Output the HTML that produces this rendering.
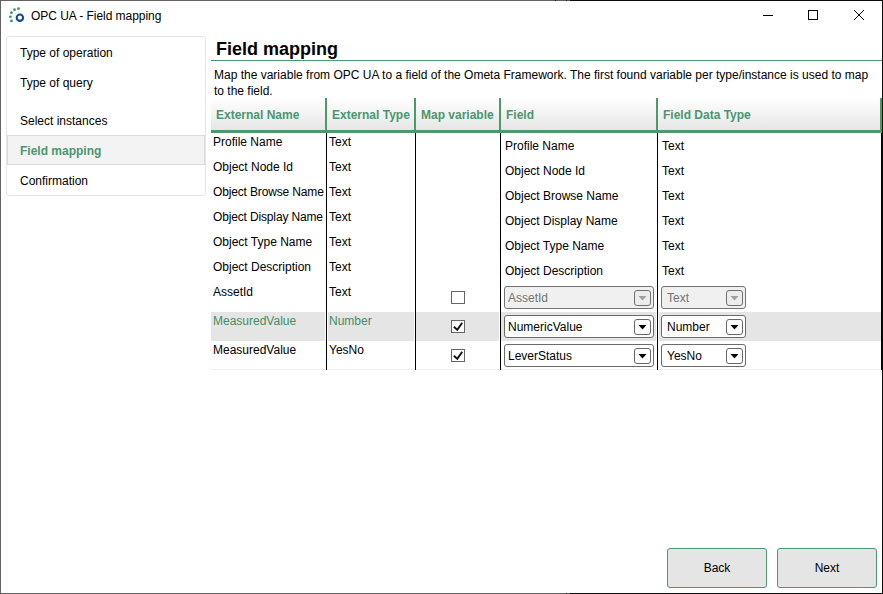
<!DOCTYPE html>
<html><head><meta charset="utf-8">
<style>
*{box-sizing:border-box;margin:0;padding:0}
html,body{width:883px;height:594px;overflow:hidden;background:#fff}
body{position:relative;font-family:"Liberation Sans",sans-serif;font-size:12px;color:#000}
.a{position:absolute;white-space:nowrap;line-height:16px}
.b{position:absolute}
.g{color:#3f8f62}
.hd{font-weight:bold;color:#4b9670}
.vl{position:absolute;width:1px;background:#000;top:133px;height:237px}
.hs{position:absolute;width:2px;background:#4a9a6c;top:98px;height:35px}
.cb{position:absolute;width:14px;height:13px;border:1px solid #656565;background:#fff}
.cb svg{position:absolute;left:-1px;top:-1px}
.combo{position:absolute;height:23px;border:1px solid #6b6b6b;border-radius:3px;background:#fff}
.combo.dis{background:#f0f0f0;border-color:#737373}
.btn{position:absolute;width:17px;height:16px;border:1px solid #666;border-radius:3px;background:#fff}
.btn svg{position:absolute;left:-1px;top:-1px}
.dis .btn svg path{fill:#a0a0a0}
.dis .btn{border-color:#6f6f6f;background:#ececec}
.nbtn{position:absolute;width:100px;height:40px;border:1px solid #4a9a6c;border-radius:3px;background:#e5e5e5;text-align:center;line-height:38px}
</style></head><body>

<!-- window borders -->
<div class="b" style="left:0;top:0;width:570px;height:1px;background:#626262"></div>
<div class="b" style="left:570px;top:0;width:313px;height:1px;background:#0b0b0b"></div>
<div class="b" style="left:0;top:593px;width:570px;height:1px;background:#626262"></div>
<div class="b" style="left:570px;top:593px;width:313px;height:1px;background:#0b0b0b"></div>
<div class="b" style="left:0;top:0;width:1px;height:594px;background:#626262"></div>
<div class="b" style="left:882px;top:0;width:1px;height:594px;background:#0b0b0b"></div>

<div class="b" style="left:555px;top:0;width:1px;height:1px;background:#1a1a1a"></div>
<div class="b" style="left:566px;top:0;width:1px;height:1px;background:#1a1a1a"></div>
<div class="b" style="left:566px;top:593px;width:1px;height:1px;background:#1a1a1a"></div>

<!-- title bar -->
<svg class="b" style="left:0;top:0" width="30" height="30" viewBox="0 0 30 30">
<g fill="#3f9863"><circle cx="18.5" cy="8.7" r="1.4"/><circle cx="14.5" cy="9.7" r="1.4"/><circle cx="11.45" cy="12.7" r="1.4"/><circle cx="10.4" cy="16.85" r="1.4"/><circle cx="11.45" cy="20.9" r="1.4"/></g>
<circle cx="19.9" cy="17.7" r="3.2" fill="none" stroke="#12489a" stroke-width="2.1"/>
</svg>
<div class="a" style="left:31px;top:8px;letter-spacing:-0.05px">OPC UA - Field mapping</div>

<!-- window controls -->
<div class="b" style="left:763px;top:15px;width:10px;height:1px;background:#000"></div>
<div class="b" style="left:808px;top:10px;width:10px;height:10px;border:1px solid #000"></div>
<svg class="b" style="left:853px;top:9px" width="12" height="12" viewBox="0 0 12 12"><path d="M1 1L11 11M11 1L1 11" stroke="#000" stroke-width="1"/></svg>

<!-- nav panel -->
<div class="b" style="left:6px;top:36px;width:200px;height:160px;border:1px solid #e4e4e4;border-radius:3px"></div>
<div class="b" style="left:7px;top:135px;width:198px;height:30px;border:1px solid #dadada;background:#f3f3f3"></div>
<div class="a" style="left:20px;top:45px">Type of operation</div>
<div class="a" style="left:20px;top:75px">Type of query</div>
<div class="a" style="left:20px;top:113px">Select instances</div>
<div class="a hd" style="left:20px;top:143px">Field mapping</div>
<div class="a" style="left:20px;top:173px">Confirmation</div>

<!-- content title -->
<div class="a" style="left:216px;top:39px;font-size:18px;font-weight:bold;line-height:20px">Field mapping</div>
<div class="b" style="left:211px;top:60px;width:671px;height:1px;background:#4a9a6c"></div>
<div class="a" style="left:214px;top:67px">Map the variable from OPC UA to a field of the Ometa Framework. The first found variable per type/instance is used to map</div>
<div class="a" style="left:214px;top:83px">to the field.</div>

<!-- table header -->
<div class="b" style="left:211px;top:98px;width:671px;height:32px;background:linear-gradient(#ffffff,#e6e6e6)"></div>
<div class="b" style="left:211px;top:130px;width:671px;height:3px;background:#4a9a6c"></div>
<div class="hs" style="left:325px"></div>
<div class="hs" style="left:414px"></div>
<div class="hs" style="left:499px"></div>
<div class="hs" style="left:656px"></div>
<div class="hs" style="left:880px"></div>
<div class="a hd" style="left:216px;top:107px">External Name</div>
<div class="a hd" style="left:332px;top:107px">External Type</div>
<div class="a hd" style="left:421px;top:107px">Map variable</div>
<div class="a hd" style="left:506px;top:107px">Field</div>
<div class="a hd" style="left:663px;top:107px">Field Data Type</div>

<!-- highlighted row -->
<div class="b" style="left:211px;top:312px;width:114px;height:29px;background:#e5e5e5"></div>
<div class="b" style="left:328px;top:312px;width:86px;height:29px;background:#e5e5e5"></div>
<div class="b" style="left:416px;top:312px;width:83px;height:29px;background:#e5e5e5"></div>
<div class="b" style="left:501px;top:312px;width:155px;height:29px;background:#e5e5e5"></div>
<div class="b" style="left:659px;top:312px;width:222px;height:29px;background:#e5e5e5"></div>
<div class="b" style="left:211px;top:369px;width:670px;height:1px;background:#f0f0f0"></div>

<!-- vertical lines -->
<div class="vl" style="left:326px"></div>
<div class="vl" style="left:415px"></div>
<div class="vl" style="left:500px"></div>
<div class="vl" style="left:657px"></div>
<div class="vl" style="left:881px"></div>

<!-- rows col1/col2 -->
<div class="a" style="left:213px;top:134px">Profile Name</div>
<div class="a" style="left:213px;top:159px">Object Node Id</div>
<div class="a" style="left:213px;top:184px;letter-spacing:-0.15px">Object Browse Name</div>
<div class="a" style="left:213px;top:209px;letter-spacing:-0.15px">Object Display Name</div>
<div class="a" style="left:213px;top:234px">Object Type Name</div>
<div class="a" style="left:213px;top:259px">Object Description</div>
<div class="a" style="left:213px;top:284px">AssetId</div>
<div class="a g" style="left:213px;top:313px">MeasuredValue</div>
<div class="a" style="left:213px;top:342px">MeasuredValue</div>

<div class="a" style="left:329px;top:134px">Text</div>
<div class="a" style="left:329px;top:159px">Text</div>
<div class="a" style="left:329px;top:184px">Text</div>
<div class="a" style="left:329px;top:209px">Text</div>
<div class="a" style="left:329px;top:234px">Text</div>
<div class="a" style="left:329px;top:259px">Text</div>
<div class="a" style="left:329px;top:284px">Text</div>
<div class="a g" style="left:329px;top:313px">Number</div>
<div class="a" style="left:329px;top:342px">YesNo</div>

<!-- field col -->
<div class="a" style="left:505px;top:138px">Profile Name</div>
<div class="a" style="left:505px;top:163px">Object Node Id</div>
<div class="a" style="left:505px;top:188px">Object Browse Name</div>
<div class="a" style="left:505px;top:213px">Object Display Name</div>
<div class="a" style="left:505px;top:238px">Object Type Name</div>
<div class="a" style="left:505px;top:263px">Object Description</div>

<div class="a" style="left:662px;top:138px">Text</div>
<div class="a" style="left:662px;top:163px">Text</div>
<div class="a" style="left:662px;top:188px">Text</div>
<div class="a" style="left:662px;top:213px">Text</div>
<div class="a" style="left:662px;top:238px">Text</div>
<div class="a" style="left:662px;top:263px">Text</div>

<!-- checkboxes -->
<div class="cb" style="left:451px;top:291px"></div>
<div class="cb" style="left:451px;top:320px"><svg width="14" height="13" viewBox="0 0 14 13"><path d="M2.9 6.7L6.3 9.9L11.2 2.7" fill="none" stroke="#111" stroke-width="1.9"/></svg></div>
<div class="cb" style="left:451px;top:349px"><svg width="14" height="13" viewBox="0 0 14 13"><path d="M2.9 6.7L6.3 9.9L11.2 2.7" fill="none" stroke="#111" stroke-width="1.9"/></svg></div>

<!-- combos -->
<div class="combo dis" style="left:504px;top:286px;width:150px"><div class="a" style="left:3px;top:3px;color:#737373">AssetId</div><div class="btn" style="left:129px;top:3px"><svg width="17" height="16" viewBox="0 0 17 16"><path d="M4.5 6H12.5L8.5 10.5Z" fill="#000"/></svg></div></div>
<div class="combo" style="left:504px;top:315px;width:150px"><div class="a" style="left:3px;top:3px">NumericValue</div><div class="btn" style="left:129px;top:3px"><svg width="17" height="16" viewBox="0 0 17 16"><path d="M4.5 6H12.5L8.5 10.5Z" fill="#000"/></svg></div></div>
<div class="combo" style="left:504px;top:344px;width:150px"><div class="a" style="left:3px;top:3px">LeverStatus</div><div class="btn" style="left:129px;top:3px"><svg width="17" height="16" viewBox="0 0 17 16"><path d="M4.5 6H12.5L8.5 10.5Z" fill="#000"/></svg></div></div>

<div class="combo dis" style="left:661px;top:286px;width:85px"><div class="a" style="left:5px;top:3px;color:#737373">Text</div><div class="btn" style="left:64px;top:3px"><svg width="17" height="16" viewBox="0 0 17 16"><path d="M4.5 6H12.5L8.5 10.5Z" fill="#000"/></svg></div></div>
<div class="combo" style="left:661px;top:315px;width:85px"><div class="a" style="left:5px;top:3px">Number</div><div class="btn" style="left:64px;top:3px"><svg width="17" height="16" viewBox="0 0 17 16"><path d="M4.5 6H12.5L8.5 10.5Z" fill="#000"/></svg></div></div>
<div class="combo" style="left:661px;top:344px;width:85px"><div class="a" style="left:5px;top:3px">YesNo</div><div class="btn" style="left:64px;top:3px"><svg width="17" height="16" viewBox="0 0 17 16"><path d="M4.5 6H12.5L8.5 10.5Z" fill="#000"/></svg></div></div>

<!-- buttons -->
<div class="nbtn" style="left:667px;top:548px">Back</div>
<div class="nbtn" style="left:777px;top:548px">Next</div>

</body></html>
